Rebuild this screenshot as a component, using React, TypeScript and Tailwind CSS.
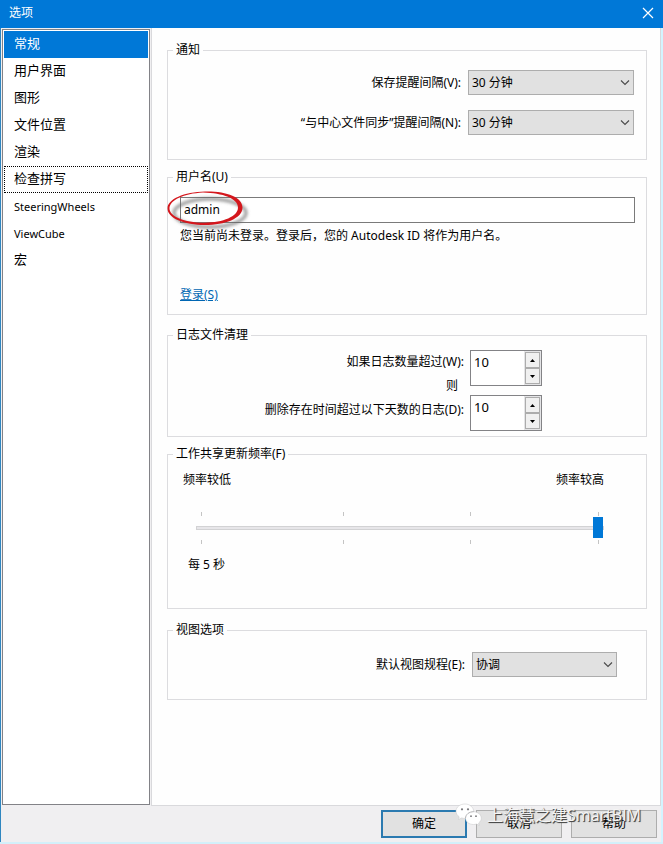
import { useState } from 'react';
import type { ReactNode } from 'react';

const navItems = ['常规', '用户界面', '图形', '文件位置', '渲染', '检查拼写', 'SteeringWheels', 'ViewCube', '宏'];

const intervals = ['30 分钟', '15 分钟', '1 小时'];

interface GroupProps {
  title: string;
  className?: string;
  bodyClassName: string;
  children: ReactNode;
}

function Group({ title, className = '', bodyClassName, children }: GroupProps) {
  return (
    <fieldset className={`min-w-0 border border-[#dcdcdf] ${className}`}>
      <legend className="ml-[5px] px-[3px] leading-4">{title}</legend>
      <div className={bodyClassName}>{children}</div>
    </fieldset>
  );
}

interface SelectFieldProps {
  id: string;
  label: string;
  options: string[];
  width: string;
}

function SelectField({ id, label, options, width }: SelectFieldProps) {
  return (
    <div className="flex items-center justify-end gap-[7px]">
      <label htmlFor={id}>{label}</label>
      <div className={`relative ${width}`}>
        <select
          id={id}
          className="block h-[25px] w-full appearance-none border border-[#adadad] bg-[#e1e1e1] pl-[3px] pr-5 outline-none"
        >
          {options.map((option) => (
            <option key={option}>{option}</option>
          ))}
        </select>
        <svg
          className="pointer-events-none absolute right-1 top-2 h-[9px] w-[10px]"
          viewBox="0 0 10 9"
          fill="none"
          stroke="#4a4a4a"
          strokeWidth="1.1"
        >
          <path d="M1 2.5 5 6.5 9 2.5" />
        </svg>
      </div>
    </div>
  );
}

function Spinner({ id }: { id: string }) {
  const [value, setValue] = useState(10);

  return (
    <div className="flex h-9 w-[72px] border border-[#838386] bg-white">
      <input
        id={id}
        value={value}
        onChange={(e) => setValue(Number(e.target.value) || 0)}
        className="h-[22px] w-0 flex-1 pl-[3px] text-[13px] outline-none"
      />
      <div className="flex w-[17px] flex-col bg-[#e4e4e6] p-px">
        <button
          type="button"
          aria-label="增加"
          onClick={() => setValue(value + 1)}
          className="flex flex-1 items-center justify-center border border-[#acacac] bg-[#f0f0f0]"
        >
          <svg className="h-[3px] w-[5px]" viewBox="0 0 5 3">
            <path d="M2.5 0 5 3H0Z" />
          </svg>
        </button>
        <button
          type="button"
          aria-label="减少"
          onClick={() => setValue(value - 1)}
          className="flex flex-1 items-center justify-center border border-[#acacac] bg-[#f0f0f0]"
        >
          <svg className="h-[3px] w-[5px]" viewBox="0 0 5 3">
            <path d="M0 0H5L2.5 3Z" />
          </svg>
        </button>
      </div>
    </div>
  );
}

function Ticks() {
  return (
    <div className="grid grid-cols-[142fr_127fr_128fr_1px] px-[5px]">
      {[0, 1, 2, 3].map((tick) => (
        <span key={tick} className="h-1 w-px bg-[#c4c4c4]" />
      ))}
    </div>
  );
}

function Highlight() {
  return (
    <svg className="pointer-events-none absolute -left-[13px] -top-2 h-[44px] w-[84px]" viewBox="0 0 84 44" fill="none">
      <defs>
        <filter id="soft" x="-20%" y="-20%" width="140%" height="150%">
          <feGaussianBlur stdDeviation="1.6" />
        </filter>
      </defs>
      <ellipse cx="43" cy="24" rx="36" ry="14" stroke="#666" strokeOpacity="0.6" strokeWidth="3.5" filter="url(#soft)" />
      <path
        fill="#d4161c"
        fillRule="evenodd"
        d="M38 2.500C59 2 75.500 8 75.500 18.500C75.500 29.500 58 36 38 36C17 36 .5 29 .5 19.500C.5 10 17 3 38 2.500ZM36 3.500C17 4.500 2.500 11 2.500 19.500C2.500 27.500 18 34 38 33.700C56 33.500 71 27.500 71 18.500C71 9.500 56 4 36 3.500Z"
      />
    </svg>
  );
}

function Watermark() {
  return (
    <div className="pointer-events-none absolute -top-[3px] right-5 flex items-center gap-1 font-['Open_Sans','Noto_Sans_CJK_SC',sans-serif] text-[16px] leading-5">
      <svg className="h-[24px] w-[28px]" viewBox="0 0 28 24">
        <path
          d="M10 1C4.800 1 1 4.200 1 8.200C1 10.500 2.300 12.500 4.200 13.800L3.500 16.500L6.500 14.900C8 15.300 9 15.400 10.500 15.400C11 19 14 21.500 18.500 21.500C19.600 21.500 20.600 21.300 21.500 21L24.300 22.300L23.600 20C25.300 18.800 26.300 17.200 26.300 15.200C26.300 11.700 23 9 18.800 8.700C18.500 4.200 14.800 1 10 1Z"
          fill="#fff"
          stroke="#c4c4c6"
          strokeWidth="0.5"
        />
        <path d="M18.800 8.700C14 8.700 10.500 11.500 10.500 15.400" fill="none" stroke="#a9a9ab" strokeWidth="0.9" />
        <g fill="#77777a">
          <circle cx="7" cy="6.300" r="1.100" />
          <circle cx="13" cy="6.300" r="1.100" />
          <circle cx="16" cy="13.200" r="0.900" />
          <circle cx="21" cy="13.200" r="0.900" />
        </g>
      </svg>
      <span className="whitespace-nowrap text-[#f5f5f5] [text-shadow:1px_1px_1px_#444,1px_1px_0_#777]">
        上海慧之建SmartBIM
      </span>
    </div>
  );
}

export default function App() {
  const [active, setActive] = useState('常规');

  return (
    <div
      lang="zh-CN"
      className="flex min-h-screen flex-col border-b-2 border-[#d3f0fa] bg-[#f0eff1] font-['Noto_Sans','Noto_Sans_CJK_SC',sans-serif] text-[12px] leading-4 text-black"
    >
      <header className="flex h-7 items-center justify-between bg-[#0078d7] px-[9px] pb-[3px] text-white">
        <h1>选项</h1>
        <button type="button" aria-label="关闭">
          <svg className="h-3 w-3" viewBox="0 0 12 12" stroke="#fff" strokeWidth="1.2">
            <path d="M1 1 11 11M11 1 1 11" />
          </svg>
        </button>
      </header>

      <div className="flex flex-1 flex-col border-l border-r-2 border-l-[#2f86c0] border-r-[#d3f4ff]">
        <div className="flex flex-1 gap-px">
          <nav className="mb-px ml-px mt-px w-[148px] shrink-0 border border-[#828287] bg-white p-px">
            {navItems.map((item) => (
              <button
                key={item}
                type="button"
                onClick={() => setActive(item)}
                className={`flex h-[27px] w-full items-center border pl-[9px] ${
                  /^[A-Z]/.test(item) ? 'text-[11px]' : 'pb-[3px] text-[13px]'
                } ${active === item ? 'bg-[#0078d7] text-white' : ''} ${
                  item === '检查拼写' ? 'border-dotted border-black' : 'border-transparent'
                }`}
              >
                {item}
              </button>
            ))}
          </nav>

          <main className="min-w-0 flex-1 border-x border-b border-[#d9d9dc] bg-[#fefefe] pb-4 pl-[15px] pr-[13px] pt-[14px]">
            <Group title="通知" bodyClassName="flex flex-col gap-[15px] pb-6 pr-3 pt-3">
              <SelectField id="save" label="保存提醒间隔(V):" options={intervals} width="w-[166px]" />
              <SelectField id="sync" label="“与中心文件同步”提醒间隔(N):" options={intervals} width="w-[166px]" />
            </Group>

            <Group title="用户名(U)" className="mt-[9px]" bodyClassName="pb-[11px] pl-3 pr-[11px] pt-3">
              <div className="relative">
                <input
                  aria-label="用户名"
                  defaultValue="admin"
                  className="block h-[26px] w-full border border-[#7a7a7a] bg-white pb-px pl-[3px] outline-none"
                />
                <Highlight />
              </div>
              <p className="mt-[5px]">您当前尚未登录。登录后，您的 Autodesk ID 将作为用户名。</p>
              <a href="#login" className="mt-[43px] block w-fit text-[#0066b3] underline">
                登录(S)
              </a>
            </Group>

            <Group title="日志文件清理" className="mt-3" bodyClassName="flex justify-end gap-[6px] pb-[5px] pr-[104px] pt-[7px]">
              <div className="flex flex-col items-end gap-2 pt-1">
                <label htmlFor="count">如果日志数量超过(W):</label>
                <span className="pr-[6px]">则</span>
                <label htmlFor="days">删除存在时间超过以下天数的日志(D):</label>
              </div>
              <div className="flex flex-col gap-[9px]">
                <Spinner id="count" />
                <Spinner id="days" />
              </div>
            </Group>

            <Group title="工作共享更新频率(F)" className="mt-[9px]" bodyClassName="pb-[35px] pl-[15px] pr-[42px] pt-[10px]">
              <div className="flex justify-between">
                <span>频率较低</span>
                <span>频率较高</span>
              </div>
              <div className="ml-[13px] mt-6">
                <Ticks />
                <input
                  type="range"
                  min={0}
                  max={3}
                  defaultValue={3}
                  aria-label="工作共享更新频率"
                  className="block h-6 w-full appearance-none bg-transparent [&::-webkit-slider-runnable-track]:h-1 [&::-webkit-slider-runnable-track]:border [&::-webkit-slider-runnable-track]:border-[#d2d2d4] [&::-webkit-slider-runnable-track]:bg-[#e7e6e9] [&::-webkit-slider-thumb]:-mt-[10px] [&::-webkit-slider-thumb]:h-[21px] [&::-webkit-slider-thumb]:w-[10px] [&::-webkit-slider-thumb]:appearance-none [&::-webkit-slider-thumb]:bg-[#0078d7]"
                />
                <Ticks />
              </div>
              <p className="ml-[5px] mt-[13px]">每 5 秒</p>
            </Group>

            <Group title="视图选项" className="mt-[13px]" bodyClassName="pb-[22px] pr-[29px] pt-[14px]">
              <SelectField id="discipline" label="默认视图规程(E):" options={['协调', '建筑', '结构', '机械']} width="w-[145px]" />
            </Group>
          </main>
        </div>

        <footer className="relative flex h-9 items-center justify-end gap-[9px] pr-1">
          <button type="button" className="h-7 w-[86px] border-2 border-[#2b7ab0] bg-[#e1e1e1]">
            确定
          </button>
          <button type="button" className="h-7 w-[86px] border border-[#adadad] bg-[#e1e1e1]">
            取消
          </button>
          <button type="button" className="h-7 w-[86px] border border-[#adadad] bg-[#e1e1e1]">
            帮助
          </button>
          <Watermark />
        </footer>
      </div>
    </div>
  );
}
